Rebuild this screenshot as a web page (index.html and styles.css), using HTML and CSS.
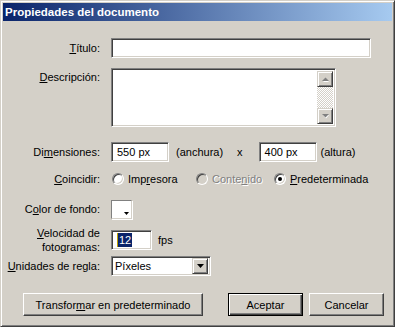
FILE: index.html
```html
<!DOCTYPE html>
<html lang="es">
<head>
    <meta charset="UTF-8">
    <meta name="viewport" content="width=device-width, initial-scale=1.0">
    <link rel="stylesheet" href="styles.css">
</head>
<body>
    <div class="window">
        <div class="titlebar">Propiedades del documento</div>

        <div class="content">
            <div class="row row-titulo">
                <span class="label"><u>T</u>ítulo:</span>
                <div class="sunken field-titulo"></div>
            </div>

            <div class="row row-desc">
                <span class="label label-top"><u>D</u>escripción:</span>
                <div class="sunken textarea">
                    <div class="scrollbar">
                        <span class="raised scroll-btn">
                            <svg width="7" height="5" viewBox="0 0 7 5"><path d="M1 5h6L4 2z" fill="#fff"/><path d="M0 4h7L3.5 0.5z" fill="#808080"/></svg>
                        </span>
                        <span class="scroll-track"></span>
                        <span class="raised scroll-btn">
                            <svg width="7" height="5" viewBox="0 0 7 5"><path d="M1 1h6L4 4.5z" fill="#fff"/><path d="M0 0h7L3.5 3.5z" fill="#808080"/></svg>
                        </span>
                    </div>
                </div>
            </div>

            <div class="row row-dim">
                <span class="label">Di<u>m</u>ensiones:</span>
                <div class="sunken input-dim">550 px</div>
                <span class="dim-unit">(anchura)</span>
                <span class="dim-x">x</span>
                <div class="sunken input-dim">400 px</div>
                <span class="dim-unit dim-unit-last">(altura)</span>
            </div>

            <div class="row row-match">
                <span class="label"><u>C</u>oincidir:</span>
                <div class="options">
                    <div class="option option-1">
                        <span class="radio"></span>
                        <span>Imp<u>r</u>esora</span>
                    </div>
                    <div class="option option-2 disabled">
                        <span class="radio"></span>
                        <span>Conte<u>n</u>ido</span>
                    </div>
                    <div class="option">
                        <span class="radio checked"></span>
                        <span><u>P</u>redeterminada</span>
                    </div>
                </div>
            </div>

            <div class="row row-color">
                <span class="label">C<u>o</u>lor de fondo:</span>
                <div class="swatch">
                    <svg width="5" height="3" viewBox="0 0 5 3"><path d="M0 0h5L2.5 3z" fill="#000"/></svg>
                </div>
            </div>

            <div class="row row-fps">
                <span class="label"><u>V</u>elocidad de<br>fotogramas:</span>
                <div class="sunken input-fps"><span class="selected">12</span></div>
                <span class="fps-unit">fps</span>
            </div>

            <div class="row row-units">
                <span class="label"><u>U</u>nidades de regla:</span>
                <div class="sunken select">
                    <span class="select-value">Píxeles</span>
                    <span class="raised drop-btn">
                        <svg width="7" height="4" viewBox="0 0 7 4"><path d="M0 0h7L3.5 4z" fill="#000"/></svg>
                    </span>
                </div>
            </div>

            <div class="buttons">
                <button class="btn btn-wide">Transfor<u>m</u>ar en predeterminado</button>
                <button class="btn btn-default">Aceptar</button>
                <button class="btn btn-cancel">Cancelar</button>
            </div>
        </div>
    </div>
</body>
</html>
```

FILE: styles.css
```css
* {
    box-sizing: border-box;
}

body {
    margin: 0;
    background: #d4d0c8;
    font-family: "Liberation Sans", Arial, sans-serif;
    font-size: 11px;
    color: #000;
}

u {
    text-decoration: underline;
    text-underline-offset: 1px;
}

.window {
    width: 395px;
    height: 327px;
    padding: 2px;
    background: #d4d0c8;
    border: 1px solid;
    border-color: #d4d0c8 #404040 #404040 #d4d0c8;
    box-shadow: inset 1px 1px #fff, inset -1px -1px #808080;
}

.titlebar {
    height: 18px;
    padding-left: 2px;
    line-height: 18px;
    font-size: 11.5px;
    font-weight: bold;
    color: #fff;
    background: linear-gradient(to right, #0a246a, #a6caf0);
}

.content {
    padding-top: 17px;
}

/* classic 3d borders */
.sunken {
    background: #fff;
    border: 1px solid;
    border-color: #808080 #fff #fff #808080;
    box-shadow: inset 1px 1px #404040, inset -1px -1px #d4d0c8;
}

.raised {
    background: #d4d0c8;
    border: 1px solid;
    border-color: #d4d0c8 #404040 #404040 #d4d0c8;
    box-shadow: inset 1px 1px #fff, inset -1px -1px #808080;
}

.row {
    display: flex;
    align-items: center;
}

.label {
    flex: none;
    width: 97px;
    margin-right: 11px;
    text-align: right;
    line-height: 14px;
}

.label-top {
    align-self: flex-start;
    padding-top: 2px;
}

/* rows */
.row-titulo {
    height: 20px;
}

.field-titulo {
    width: 260px;
    height: 20px;
}

.row-desc {
    margin-top: 10px;
}

.textarea {
    display: flex;
    justify-content: flex-end;
    width: 225px;
    height: 59px;
    padding: 2px;
}

.scrollbar {
    display: flex;
    flex-direction: column;
    width: 16px;
}

.scroll-btn {
    display: flex;
    align-items: center;
    justify-content: center;
    width: 16px;
    height: 16px;
}

.scroll-track {
    flex: 1;
    background: repeating-conic-gradient(#d4d0c8 0 25%, #fff 0 50%) 0 0 / 2px 2px;
}

.row-dim {
    margin-top: 15px;
    height: 20px;
}

.input-dim {
    width: 58px;
    height: 20px;
    padding: 2px 3px 2px 5px;
    line-height: 15px;
}

.dim-unit {
    margin-left: 7px;
}

.dim-unit-last {
    margin-left: 4px;
}

.dim-x {
    margin: 0 16px 0 14px;
}

.row-match {
    margin-top: 8px;
    height: 17px;
}

.options {
    display: flex;
    align-items: center;
    margin-left: 1px;
}

.option {
    display: flex;
    align-items: center;
    gap: 4px;
}

.option-1 {
    width: 84px;
}

.option-2 {
    width: 78px;
}

.radio {
    display: flex;
    align-items: center;
    justify-content: center;
    width: 12px;
    height: 12px;
    border-radius: 50%;
    background: #fff;
    border: 1px solid;
    border-color: #808080 #fff #fff #808080;
    box-shadow: inset 1px 1px #404040, inset -1px -1px #d4d0c8;
}

.radio.checked::after {
    content: "";
    width: 4px;
    height: 4px;
    border-radius: 50%;
    background: #000;
}

.disabled {
    color: #808080;
    text-shadow: 1px 1px #fff;
}

.disabled .radio {
    background: #d4d0c8;
}

.row-color {
    margin-top: 12px;
    height: 20px;
}

.swatch {
    display: flex;
    align-items: flex-end;
    justify-content: flex-end;
    width: 21px;
    height: 19px;
    padding: 0 2px 3px 0;
    background: #fff;
    border: 1px solid;
    border-color: #808080 #d4d0c8 #d4d0c8 #808080;
    box-shadow: 1px 1px #fff;
}

.row-fps {
    margin-top: 7px;
    height: 28px;
}

.input-fps {
    width: 41px;
    height: 20px;
    padding: 2px 2px 2px 5px;
    line-height: 14px;
}

.selected {
    display: inline-block;
    padding: 0 1px;
    background: #0a246a;
    color: #fff;
    border-left: 1px solid #c0a000;
}

.fps-unit {
    margin-left: 6px;
}

.row-units {
    margin-top: 2px;
    height: 20px;
}

.select {
    display: flex;
    align-items: center;
    width: 100px;
    height: 20px;
    padding: 2px;
}

.select-value {
    flex: 1;
    padding-left: 1px;
}

.drop-btn {
    display: flex;
    align-items: center;
    justify-content: center;
    width: 16px;
    height: 16px;
}

/* bottom buttons */
.buttons {
    display: flex;
    margin-top: 17px;
    padding-left: 20px;
}

.btn {
    height: 23px;
    padding: 0;
    font-family: inherit;
    font-size: 11px;
    color: #000;
    background: #d4d0c8;
    border: 1px solid;
    border-color: #fff #404040 #404040 #fff;
    box-shadow: inset -1px -1px #808080;
}

.btn-wide {
    width: 180px;
}

.btn-default {
    width: 75px;
    margin-left: 25px;
    border-color: #000;
    box-shadow: inset 1px 1px #fff, inset -1px -1px #404040, inset -2px -2px #808080;
}

.btn-cancel {
    width: 75px;
    margin-left: 6px;
}
```
